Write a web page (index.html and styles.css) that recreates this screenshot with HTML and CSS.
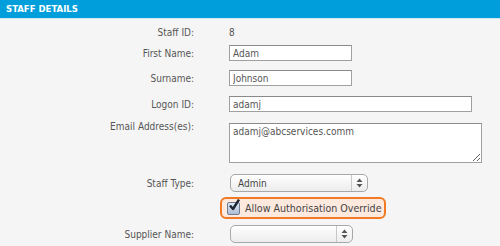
FILE: index.html
```html
<!DOCTYPE html>
<html lang="en">
<head>
    <meta charset="UTF-8">
    <title>Staff Details</title>
    <link rel="stylesheet" href="styles.css">
</head>
<body>

<div class="panel">
    <div class="panel-header">STAFF DETAILS</div>
    <div class="form">
        <div class="row row-id">
            <label>Staff ID:</label>
            <span class="value">8</span>
        </div>
        <div class="row row-first">
            <label>First Name:</label>
            <input type="text" class="field short" value="Adam">
        </div>
        <div class="row row-surname">
            <label>Surname:</label>
            <input type="text" class="field short" value="Johnson">
        </div>
        <div class="row row-logon">
            <label>Logon ID:</label>
            <input type="text" class="field long" value="adamj">
        </div>
        <div class="row row-email">
            <label>Email Address(es):</label>
            <textarea class="field area">adamj@abcservices.comm</textarea>
        </div>
        <div class="row row-type">
            <label>Staff Type:</label>
            <div class="select select-type">
                <span>Admin</span>
                <span class="arrows">
                    <svg width="7" height="10" viewBox="0 0 7 10"><path d="M3.5 0.5 L6.5 4 H0.5 Z M3.5 9.5 L6.5 6 H0.5 Z" fill="#555"/></svg>
                </span>
            </div>
        </div>
        <div class="row row-override">
            <span></span>
            <div class="override">
                <span class="check">
                    <svg width="14" height="14" viewBox="0 0 14 14"><path d="M3 6.5 L6 10 L12 0.5" fill="none" stroke="#1d2433" stroke-width="2.4" stroke-linejoin="round"/></svg>
                </span>
                <span>Allow Authorisation Override</span>
            </div>
        </div>
        <div class="row row-supplier">
            <label>Supplier Name:</label>
            <div class="select select-supplier">
                <span></span>
                <span class="arrows">
                    <svg width="7" height="10" viewBox="0 0 7 10"><path d="M3.5 0.5 L6.5 4 H0.5 Z M3.5 9.5 L6.5 6 H0.5 Z" fill="#555"/></svg>
                </span>
            </div>
        </div>
    </div>
</div>

</body>
</html>
```

FILE: styles.css
```css
body {
    margin: 0;
    background-color: #f5f5f5;
    font-family: "DejaVu Sans Condensed", "DejaVu Sans", sans-serif;
    font-size: 10px;
    color: #555;
}
.panel-header {
    height: 18px;
    line-height: 18px;
    padding-left: 6px;
    background-color: #009edb;
    border-bottom: 1px solid #cde9f5;
    color: white;
    font-weight: bold;
    font-size: 9.5px;
}
.form {
    display: flex;
    flex-direction: column;
    padding-top: 5px;
}
.row {
    display: grid;
    grid-template-columns: 194px auto;
    column-gap: 35px;
    align-items: center;
}
.row label {
    text-align: right;
}
.row-id { height: 16px; }
.row-first { margin-top: 5px; }
.row-surname { margin-top: 9px; }
.row-logon { margin-top: 10px; }
.row-email {
    margin-top: 11px;
    align-items: start;
}
.row-type { margin-top: 11px; }
.row-override { margin-top: 5px; }
.row-supplier { margin-top: 6px; }

.field {
    box-sizing: border-box;
    margin: 0;
    padding: 0 3px;
    border: 1px solid #a0a0a0;
    border-top-color: #8a8a8a;
    background: white;
    font-family: inherit;
    font-size: 10px;
    color: #555;
    height: 16px;
}
.field.short { width: 123px; }
.field.long { width: 243px; }
.field.area {
    width: 253px;
    height: 40px;
    padding: 2px 3px;
    resize: both;
}
.row-email label {
    line-height: 12px;
    margin-top: -2px;
}
.select {
    display: flex;
    align-items: center;
    justify-content: space-between;
    box-sizing: border-box;
    height: 18px;
    margin-left: 1px;
    padding-left: 7px;
    border: 1px solid #a8a8a8;
    border-radius: 5px;
    background: linear-gradient(#ffffff, #ececec);
    box-shadow: inset 0 1px 0 white;
    color: #444;
}
.select-type { width: 138px; }
.select-supplier { width: 123px; }
.arrows {
    display: flex;
    align-items: center;
    justify-content: center;
    width: 15px;
    height: 100%;
    border-left: 1px solid #c8c8c8;
}
.override {
    display: flex;
    align-items: center;
    gap: 5px;
    box-sizing: border-box;
    width: 166px;
    height: 22px;
    margin-left: -9px;
    padding-left: 5px;
    border: 2px solid #f27a24;
    border-radius: 6px;
    background-color: #fde9de;
    color: #444;
    font-size: 10.6px;
    white-space: nowrap;
}
.check {
    position: relative;
    box-sizing: border-box;
    width: 13px;
    height: 13px;
    border: 1px solid #6d7b93;
    border-radius: 2px;
    background: linear-gradient(#dfe8f4, #aebdd4);
}
.check svg {
    position: absolute;
    left: -1px;
    top: -4px;
}
```
